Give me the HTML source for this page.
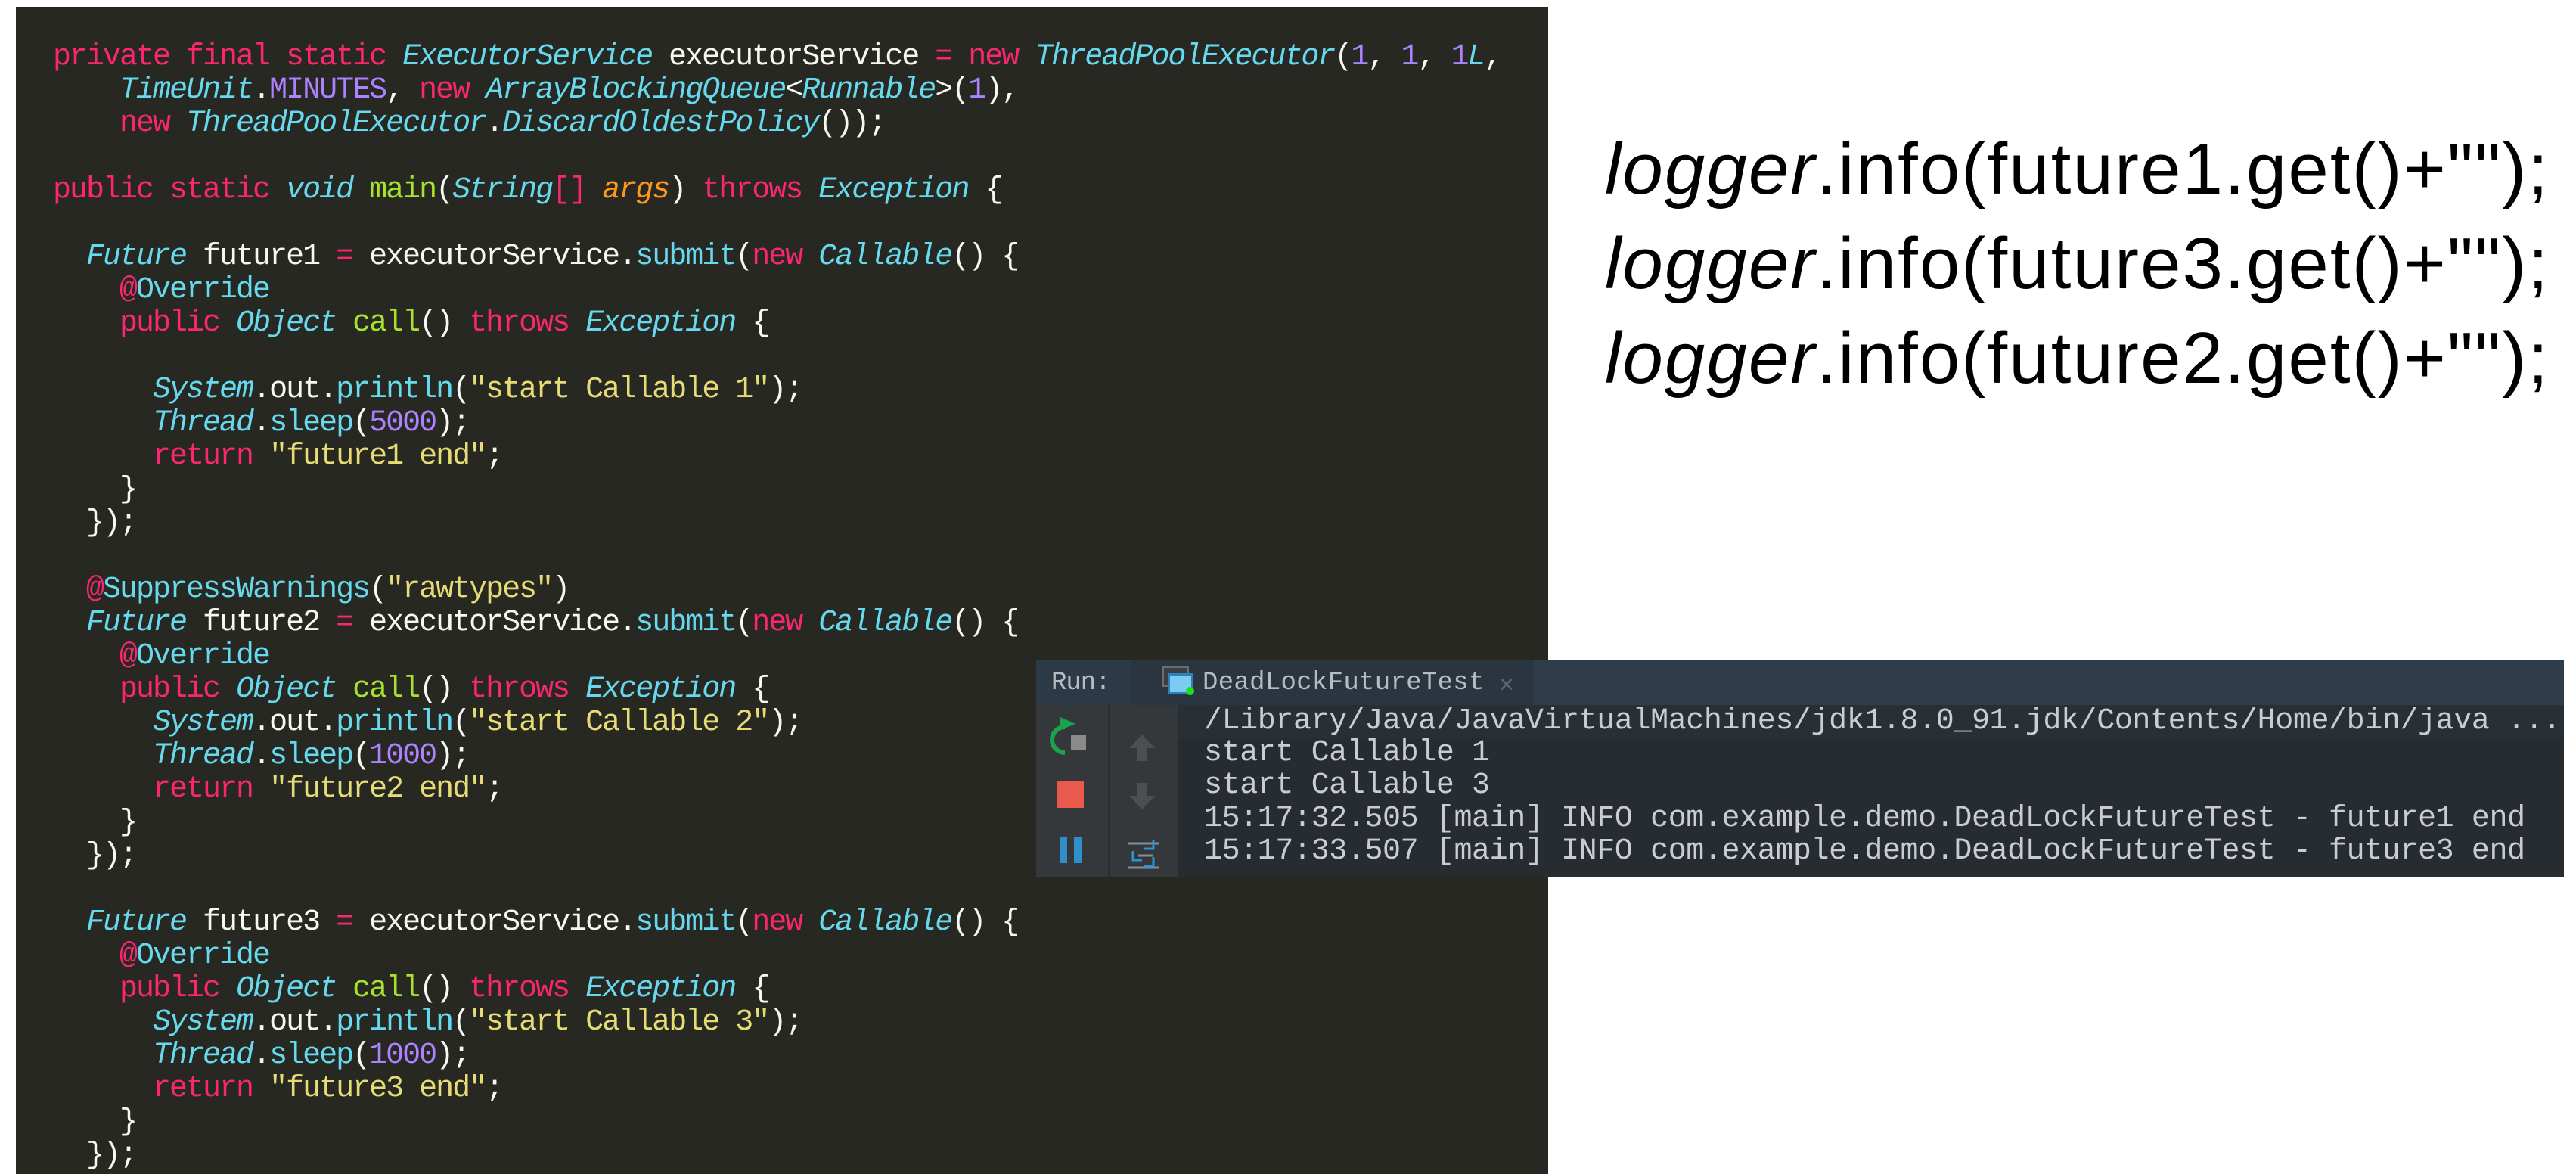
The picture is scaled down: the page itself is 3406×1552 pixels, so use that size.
<!DOCTYPE html>
<html><head><meta charset="utf-8"><style>
html,body{margin:0;padding:0;background:#fff;width:3406px;height:1552px;overflow:hidden;position:relative}
#ed{position:absolute;left:21px;top:9px;width:2026px;height:1543px;background:#272822}
.l{position:absolute;left:49px;white-space:pre;font-family:"Liberation Mono",monospace;font-size:40px;letter-spacing:-2px;color:#f8f8f2;line-height:44px;height:44px}
.k{color:#f92672}.t{color:#66d9ef;font-style:italic}.c{color:#66d9ef}.n{color:#ae81ff}.s{color:#e6db74}.f{color:#a6e22e}.a{color:#fd971f;font-style:italic}
.r{position:absolute;left:2122px;font-family:"Liberation Sans",sans-serif;font-size:96px;letter-spacing:2.1px;color:#000;white-space:pre;line-height:120px}
#con{position:absolute;left:1370px;top:873px;width:2020px;height:287px;background:#262c30}
#hd{position:absolute;left:0;top:0;width:2020px;height:59px;background:#2f3c49}
.cl{position:absolute;left:222px;white-space:pre;font-family:"Liberation Mono",monospace;font-size:40px;letter-spacing:-0.4px;color:#c9cdd1;line-height:43px}
</style></head><body>
<div id="ed">
<div class="l" style="top:45px"><span class="k">private final static</span> <span class="t">ExecutorService</span> executorService <span class="k">=</span> <span class="k">new</span> <span class="t">ThreadPoolExecutor</span>(<span class="n">1</span>, <span class="n">1</span>, <span class="n">1</span><span class="t">L</span>,</div>
<div class="l" style="top:89px">    <span class="t">TimeUnit</span>.<span class="n">MINUTES</span>, <span class="k">new</span> <span class="t">ArrayBlockingQueue</span>&lt;<span class="t">Runnable</span>&gt;(<span class="n">1</span>),</div>
<div class="l" style="top:133px">    <span class="k">new</span> <span class="t">ThreadPoolExecutor</span>.<span class="t">DiscardOldestPolicy</span>());</div>
<div class="l" style="top:221px"><span class="k">public static</span> <span class="t">void</span> <span class="f">main</span>(<span class="t">String</span><span class="k">[]</span> <span class="a">args</span>) <span class="k">throws</span> <span class="t">Exception</span> {</div>
<div class="l" style="top:309px">  <span class="t">Future</span> future1 <span class="k">=</span> executorService.<span class="c">submit</span>(<span class="k">new</span> <span class="t">Callable</span>() {</div>
<div class="l" style="top:353px">    <span class="k">@</span><span class="c">Override</span></div>
<div class="l" style="top:397px">    <span class="k">public</span> <span class="t">Object</span> <span class="f">call</span>() <span class="k">throws</span> <span class="t">Exception</span> {</div>
<div class="l" style="top:485px">      <span class="t">System</span>.out.<span class="c">println</span>(<span class="s">"start Callable 1"</span>);</div>
<div class="l" style="top:529px">      <span class="t">Thread</span>.<span class="c">sleep</span>(<span class="n">5000</span>);</div>
<div class="l" style="top:573px">      <span class="k">return</span> <span class="s">"future1 end"</span>;</div>
<div class="l" style="top:617px">    }</div>
<div class="l" style="top:661px">  });</div>
<div class="l" style="top:749px">  <span class="k">@</span><span class="c">SuppressWarnings</span>(<span class="s">"rawtypes"</span>)</div>
<div class="l" style="top:793px">  <span class="t">Future</span> future2 <span class="k">=</span> executorService.<span class="c">submit</span>(<span class="k">new</span> <span class="t">Callable</span>() {</div>
<div class="l" style="top:837px">    <span class="k">@</span><span class="c">Override</span></div>
<div class="l" style="top:881px">    <span class="k">public</span> <span class="t">Object</span> <span class="f">call</span>() <span class="k">throws</span> <span class="t">Exception</span> {</div>
<div class="l" style="top:925px">      <span class="t">System</span>.out.<span class="c">println</span>(<span class="s">"start Callable 2"</span>);</div>
<div class="l" style="top:969px">      <span class="t">Thread</span>.<span class="c">sleep</span>(<span class="n">1000</span>);</div>
<div class="l" style="top:1013px">      <span class="k">return</span> <span class="s">"future2 end"</span>;</div>
<div class="l" style="top:1057px">    }</div>
<div class="l" style="top:1101px">  });</div>
<div class="l" style="top:1189px">  <span class="t">Future</span> future3 <span class="k">=</span> executorService.<span class="c">submit</span>(<span class="k">new</span> <span class="t">Callable</span>() {</div>
<div class="l" style="top:1233px">    <span class="k">@</span><span class="c">Override</span></div>
<div class="l" style="top:1277px">    <span class="k">public</span> <span class="t">Object</span> <span class="f">call</span>() <span class="k">throws</span> <span class="t">Exception</span> {</div>
<div class="l" style="top:1321px">      <span class="t">System</span>.out.<span class="c">println</span>(<span class="s">"start Callable 3"</span>);</div>
<div class="l" style="top:1365px">      <span class="t">Thread</span>.<span class="c">sleep</span>(<span class="n">1000</span>);</div>
<div class="l" style="top:1409px">      <span class="k">return</span> <span class="s">"future3 end"</span>;</div>
<div class="l" style="top:1453px">    }</div>
<div class="l" style="top:1497px">  });</div>
</div>

<div class="r" style="top:164px"><i>logger</i>.info(future1.get()+"");</div>
<div class="r" style="top:289px"><i>logger</i>.info(future3.get()+"");</div>
<div class="r" style="top:414px"><i>logger</i>.info(future2.get()+"");</div>

<div id="con">
<div id="hd">
<div style="position:absolute;left:0;top:0;width:125px;height:59px;background:#2c3a47"></div>
<div style="position:absolute;left:125px;top:0;width:532px;height:59px;background:#2a3540"></div>
<div style="position:absolute;left:20px;top:8px;font-family:'Liberation Mono',monospace;font-size:34px;color:#b8bcc0;line-height:44px;letter-spacing:-1px">Run:</div>
<div style="position:absolute;left:166px;top:7px;width:30px;height:22px;border:3px solid #6a6d70;background:#3c3f42"></div>
<div style="position:absolute;left:174px;top:17px;width:28px;height:22px;border:3px solid #2f80b8;background:#7dcbf2"></div>
<div style="position:absolute;left:198px;top:35px;width:11px;height:11px;border-radius:50%;background:#1fe01f"></div>
<div style="position:absolute;left:220px;top:8px;font-family:'Liberation Mono',monospace;font-size:34px;color:#b8bcc0;line-height:44px;letter-spacing:0.3px">DeadLockFutureTest</div>
<div style="position:absolute;left:612px;top:10px;font-family:'Liberation Sans',sans-serif;font-size:34px;color:#5d6670;line-height:44px">×</div>
</div>
<div style="position:absolute;left:0;top:59px;width:95px;height:228px;background:#34383b;border-right:2px solid #2a2d30"></div>
<div style="position:absolute;left:97px;top:59px;width:91px;height:228px;background:#34383b"></div>
<div style="position:absolute;left:188px;top:59px;width:1832px;height:43px;background:#283035"></div>
<svg style="position:absolute;left:0;top:59px" width="188" height="228">
<path d="M38 29 A17 17 0 1 0 38 63" fill="none" stroke="#1aa34a" stroke-width="6"/>
<path d="M32 16 L52 25 L32 33 Z" fill="#1aa34a"/>
<rect x="46" y="40" width="20" height="20" fill="#8a8a8a"/>
<rect x="28" y="101" width="35" height="35" fill="#ea5a4c"/>
<rect x="31" y="174" width="10" height="35" fill="#2e8fc9"/>
<rect x="50" y="174" width="10" height="35" fill="#2e8fc9"/>
<path d="M140 39 L157 57 L146 57 L146 74 L134 74 L134 57 L123 57 Z" fill="#4b4f52"/>
<path d="M140 138 L157 120 L146 120 L146 103 L134 103 L134 120 L123 120 Z" fill="#4b4f52"/>
<path d="M122 183h40M122 215h40M135 199h20" stroke="#8a8d90" stroke-width="3"/>
<path d="M155 178 v12 h-12 M128 193 v12 h12 M155 201 v12 h-12" fill="none" stroke="#2a95d4" stroke-width="3"/>
</svg>
<div class="cl" style="top:59px">/Library/Java/JavaVirtualMachines/jdk1.8.0_91.jdk/Contents/Home/bin/java ...</div>
<div class="cl" style="top:101px">start Callable 1</div>
<div class="cl" style="top:144px">start Callable 3</div>
<div class="cl" style="top:188px">15:17:32.505 [main] INFO com.example.demo.DeadLockFutureTest - future1 end</div>
<div class="cl" style="top:231px">15:17:33.507 [main] INFO com.example.demo.DeadLockFutureTest - future3 end</div>
</div>
</body></html>
